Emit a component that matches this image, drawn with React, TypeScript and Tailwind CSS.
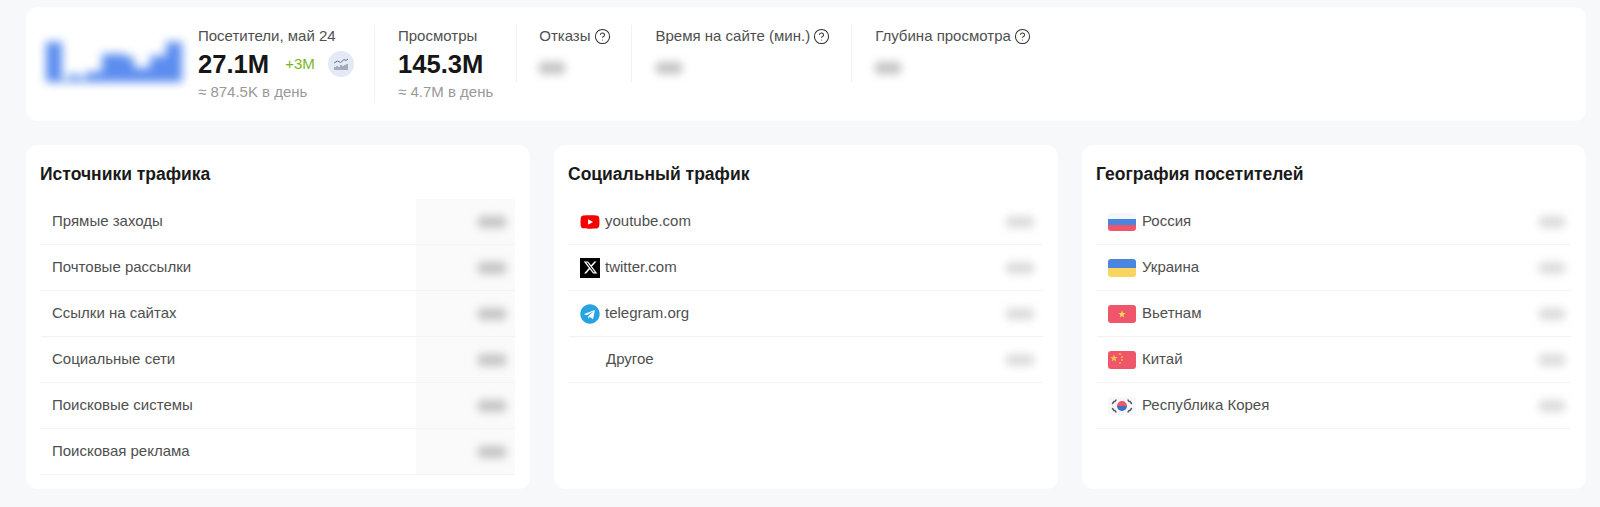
import { CircleHelp } from "lucide-react";
import type { ReactNode } from "react";
import { FaTelegram, FaYoutube } from "react-icons/fa";
import { FaXTwitter } from "react-icons/fa6";

const bars = [40, 40, 3, 8, 4, 10, 10, 28, 28, 28, 25, 14, 14, 26, 26, 40, 40];

function Blurred({ className }: { className: string }) {
  return <div className={`h-[12px] rounded-sm blur-[4px] ${className}`} />;
}

function Help() {
  return <CircleHelp className="h-[17px] w-[17px] text-[#333]" strokeWidth={1.5} />;
}

function Visits() {
  return (
    <div className="flex h-[78px] w-[177px] flex-col border-r border-[#f2f2f2]">
      <div className="h-[22px] text-[15px] leading-[22px] text-[#4f4f4f]">Посетители, май 24</div>
      <div className="mt-[2px] flex h-[30px] items-center">
        <span className="text-[25.6px] leading-[30px] font-bold text-[#161616]">27.1M</span>
        <span className="ml-[16px] text-[15px] text-[#7cb518]">+3M</span>
        <span className="ml-[13px] flex h-[26px] w-[26px] items-center justify-center rounded-full bg-[#e4e9f7]">
          <svg viewBox="0 0 16 16" className="h-[16px] w-[16px]" fill="none" stroke="#6b6f7a" strokeWidth="1">
            <path d="M1 7l3.5-2 3 1.5L11 3.5l2 1 2-1.5" />
            <path d="M2 14v-3M4 14v-4M6 14v-3M8 14V9M10 14v-4M12 14V9M14 14V8" />
          </svg>
        </span>
      </div>
      <div className="mt-[3px] text-[15px] leading-[20px] text-[#999]">≈ 874.5K в день</div>
    </div>
  );
}

function Views() {
  return (
    <div className="flex flex-col pl-[23px]">
      <div className="h-[22px] text-[15px] leading-[22px] text-[#4f4f4f]">Просмотры</div>
      <div className="mt-[2px] text-[25.6px] leading-[30px] font-bold text-[#161616]">145.3M</div>
      <div className="mt-[3px] text-[15px] leading-[20px] text-[#999]">≈ 4.7M в день</div>
    </div>
  );
}

function HiddenMetric({ label, className }: { label: string; className: string }) {
  return (
    <div className={`h-[58px] ${className}`}>
      <div className="flex h-[22px] items-center gap-[3px] text-[15px] text-[#4f4f4f]">
        {label}
        <Help />
      </div>
      <Blurred className="mt-[15px] w-[26px] bg-[#c4c4c4]" />
    </div>
  );
}

type Row = { icon?: ReactNode; label: string };

function Card({
  title,
  rows,
  shaded,
  valueClass,
  valueInset,
}: {
  title: string;
  rows: Row[];
  shaded?: boolean;
  valueClass: string;
  valueInset: string;
}) {
  return (
    <section className="h-[344px] min-w-0 rounded-xl bg-white px-[15px]">
      <h2 className="-ml-[1px] h-[54px] pt-[17px] text-[17.5px] leading-[24px] font-bold text-[#1a1a1a]">{title}</h2>
      <div className="relative">
        {shaded ? <div className="absolute top-0 right-0 bottom-0 w-[99px] bg-[#fafafa]" /> : null}
        {rows.map((row) => (
          <div
            key={row.label}
            className={`relative flex h-[46px] items-center justify-between border-b border-[#f3f3f3] pl-[11px] ${valueInset}`}
          >
            <div className="flex items-center text-[15px] text-[#4f4f4f]">
              {row.icon}
              {row.label}
            </div>
            <Blurred className={valueClass} />
          </div>
        ))}
      </div>
    </section>
  );
}

function Social({ children }: { children: ReactNode }) {
  return <span className="mr-[5px] flex h-[20px] w-[20px] items-center justify-center">{children}</span>;
}

function Flag({ children, className = "" }: { children: ReactNode; className?: string }) {
  return <span className={`mr-[6px] block h-[18px] w-[28px] overflow-hidden rounded-[3px] ${className}`}>{children}</span>;
}

const sources: Row[] = [
  { label: "Прямые заходы" },
  { label: "Почтовые рассылки" },
  { label: "Ссылки на сайтах" },
  { label: "Социальные сети" },
  { label: "Поисковые системы" },
  { label: "Поисковая реклама" },
];

const social: Row[] = [
  {
    label: "youtube.com",
    icon: (
      <Social>
        <FaYoutube className="h-[20px] w-[20px] text-[#f40000]" />
      </Social>
    ),
  },
  {
    label: "twitter.com",
    icon: (
      <Social>
        <span className="flex h-[20px] w-[20px] items-center justify-center bg-black">
          <FaXTwitter className="h-[15px] w-[15px] text-white" />
        </span>
      </Social>
    ),
  },
  {
    label: "telegram.org",
    icon: (
      <Social>
        <FaTelegram className="h-[20px] w-[20px] text-[#27a3e3]" />
      </Social>
    ),
  },
  { label: "Другое", icon: <span className="w-[26px]" /> },
];

const geo: Row[] = [
  {
    label: "Россия",
    icon: (
      <Flag className="flex flex-col">
        <span className="h-[6px] bg-[#f5f7fa]" />
        <span className="h-[6px] bg-[#4a86e0]" />
        <span className="h-[6px] bg-[#f0566a]" />
      </Flag>
    ),
  },
  {
    label: "Украина",
    icon: (
      <Flag className="flex flex-col">
        <span className="h-[9px] bg-[#4a86e0]" />
        <span className="h-[9px] bg-[#f7d560]" />
      </Flag>
    ),
  },
  {
    label: "Вьетнам",
    icon: (
      <Flag className="bg-[#f0566a]">
        <svg viewBox="0 0 28 18" className="h-full w-full">
          <path d="M14 5.5l1 2.5 2.7.1-2.1 1.7.7 2.6-2.3-1.5-2.3 1.5.7-2.6-2.1-1.7 2.7-.1z" fill="#f7d560" />
        </svg>
      </Flag>
    ),
  },
  {
    label: "Китай",
    icon: (
      <Flag className="bg-[#f0566a]">
        <svg viewBox="0 0 28 18" className="h-full w-full" fill="#f7c04a">
          <path d="M6 3.5l1 2.5 2.7.1-2.1 1.7.7 2.6L6 9l-2.3 1.5.7-2.6-2.1-1.7L5 6z" />
          <circle cx="12" cy="3" r="0.9" />
          <circle cx="14" cy="6" r="0.9" />
          <circle cx="14" cy="9" r="0.9" />
          <circle cx="12" cy="12" r="0.9" />
        </svg>
      </Flag>
    ),
  },
  {
    label: "Республика Корея",
    icon: (
      <Flag className="bg-[#f5f7fa]">
        <svg viewBox="0 0 28 18" className="h-full w-full">
          <path d="M9 9a5 5 0 0 1 10 0z" fill="#f0566a" />
          <path d="M9 9a5 5 0 0 0 10 0z" fill="#3d6fc4" />
          <g stroke="#555" strokeWidth="1.4" strokeLinecap="round">
            <path d="M6 4.5l-1.5 2M8 3l-1.2 1.6M22 4.5l1.5 2M20 3l1.2 1.6M6 13.5l-1.5-2M8 15l-1.2-1.6M22 13.5l1.5-2M20 15l1.2-1.6" />
          </g>
        </svg>
      </Flag>
    ),
  },
];

export default function App() {
  return (
    <div className="h-[507px] overflow-hidden bg-[#f7f8fa] pt-[7px] pr-[14px] pl-[26px] font-['Liberation_Sans',Arial,sans-serif]">
      <div className="flex h-[114px] items-start rounded-xl bg-white pt-[18px] pl-[20px]">
        <div className="mt-[16px] flex h-[41px] w-[136px] items-end blur-[5px]">
          {bars.map((h, i) => (
            <div key={i} className="w-[8px] bg-[#5b8def]" style={{ height: h }} />
          ))}
        </div>
        <div className="ml-[16px] flex items-start">
          <Visits />
          <Views />
          <div className="ml-[23px] h-[58px] border-l border-[#f2f2f2]" />
          <HiddenMetric label="Отказы" className="ml-[22px]" />
          <div className="ml-[20px] h-[58px] border-l border-[#f2f2f2]" />
          <HiddenMetric label="Время на сайте (мин.)" className="ml-[24px]" />
          <div className="ml-[21px] h-[58px] border-l border-[#f2f2f2]" />
          <HiddenMetric label="Глубина просмотра" className="ml-[23px]" />
        </div>
      </div>
      <div className="mt-[24px] grid grid-cols-3 gap-[24px]">
        <Card title="Источники трафика" rows={sources} shaded valueClass="w-[28px] bg-[#c4c4c4]" valueInset="pr-[9px]" />
        <Card title="Социальный трафик" rows={social} valueClass="w-[28px] bg-[#dcdcdc]" valueInset="pr-[9px]" />
        <Card title="География посетителей" rows={geo} valueClass="w-[26px] bg-[#dcdcdc]" valueInset="pr-[6px]" />
      </div>
    </div>
  );
}
